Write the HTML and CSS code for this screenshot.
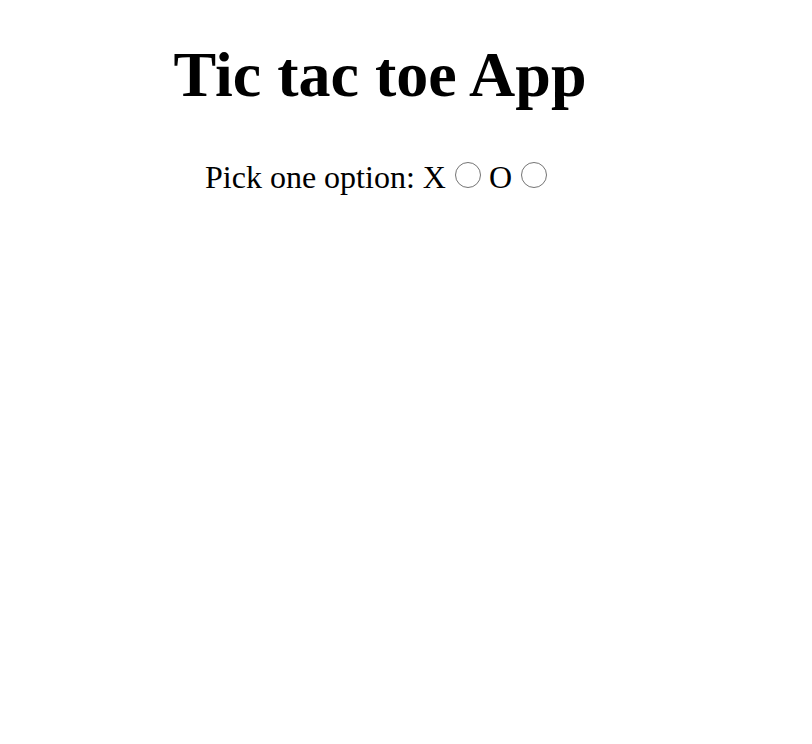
FILE: index.html
```html
<!DOCTYPE html>
<html>
<head>
<meta charset="utf-8">
<link rel="stylesheet" href="styles.css">
</head>
<body>
<div class="app">
  <h1 class="title">Tic tac toe App</h1>
  <div class="picker">
    <span class="label">Pick one option:</span>
    <label class="opt">X <input type="radio" name="opt" class="radio"></label>
    <label class="opt">O <input type="radio" name="opt" class="radio"></label>
  </div>
</div>
</body>
</html>
```
FILE: styles.css
```css
body {
  margin: 8px;
  font-family: "Liberation Serif", "Times New Roman", serif;
  background: #fff;
  color: #000;
}
.app {
  width: 744px;
  text-align: center;
}
.title {
  font-size: 64px;
  font-weight: bold;
  margin: 30px 0 0;
  line-height: 1.15;
}
.picker {
  margin-top: 47px;
  font-size: 32px;
  padding-right: 8px;
}
.radio {
  appearance: none;
  -webkit-appearance: none;
  box-sizing: border-box;
  width: 26px;
  height: 26px;
  margin: 0 0 0 1px;
  border: 1.5px solid #747474;
  border-radius: 50%;
  background: #fff;
  vertical-align: 0;
}
```
